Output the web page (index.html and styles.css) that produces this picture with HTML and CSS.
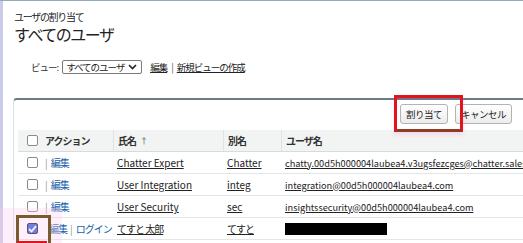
FILE: index.html
```html
<!DOCTYPE html>
<html lang="ja">
<head>
    <meta charset="UTF-8">
    <title>すべてのユーザ</title>
    <link rel="stylesheet" href="styles.css">
</head>
<body>
    <div class="page">
        <div class="head">
            <div class="sub">ユーザの割り当て</div>
            <h1 class="title">すべてのユーザ</h1>
        </div>

        <div class="view-bar">
            <span class="view-label">ビュー:</span>
            <div class="select">
                <span>すべてのユーザ</span>
                <svg width="9" height="6" viewBox="0 0 9 6"><path d="M1 1 L4.5 4.5 L8 1" fill="none" stroke="#222" stroke-width="1.6"/></svg>
            </div>
            <a href="#" class="link">編集</a>
            <span class="sep">|</span>
            <a href="#" class="link">新規ビューの作成</a>
        </div>

        <div class="panel">
            <div class="btn-row">
                <button class="btn">割り当て</button>
                <button class="btn">キャンセル</button>
            </div>

            <div class="row row-head">
                <div class="cell cell-action"><span class="box"></span><span class="jp">アクション</span></div>
                <div class="cell"><span class="jp">氏名</span> <span class="arrow">↑</span></div>
                <div class="cell"><span class="jp">別名</span></div>
                <div class="cell"><span class="jp">ユーザ名</span></div>
            </div>
            <div class="row">
                <div class="cell cell-action"><span class="box"></span><span class="bar">|</span><a href="#" class="act">編集</a></div>
                <div class="cell"><a href="#" class="name">Chatter Expert</a></div>
                <div class="cell"><a href="#" class="name">Chatter</a></div>
                <div class="cell"><a href="#" class="name mail">chatty.00d5h000004laubea4.v3ugsfezcges@chatter.salesforce.com</a></div>
            </div>
            <div class="row">
                <div class="cell cell-action"><span class="box"></span><span class="bar">|</span><a href="#" class="act">編集</a></div>
                <div class="cell"><a href="#" class="name">User Integration</a></div>
                <div class="cell"><a href="#" class="name">integ</a></div>
                <div class="cell"><a href="#" class="name mail">integration@00d5h000004laubea4.com</a></div>
            </div>
            <div class="row">
                <div class="cell cell-action"><span class="box"></span><span class="bar">|</span><a href="#" class="act">編集</a></div>
                <div class="cell"><a href="#" class="name">User Security</a></div>
                <div class="cell"><a href="#" class="name">sec</a></div>
                <div class="cell"><a href="#" class="name mail">insightssecurity@00d5h000004laubea4.com</a></div>
            </div>
            <div class="row">
                <div class="cell cell-action"><span class="box checked">
                    <svg width="9" height="8" viewBox="0 0 9 8"><path d="M1 4 L3.5 6.5 L8 1.2" fill="none" stroke="#fff" stroke-width="1.8"/></svg>
                </span><a href="#" class="act">編集</a><span class="bar">|</span><a href="#" class="act">ログイン</a></div>
                <div class="cell"><a href="#" class="name jp">てすと 太郎</a></div>
                <div class="cell"><a href="#" class="name jp">てすと</a></div>
                <div class="cell"><span class="redact"></span></div>
            </div>
        </div>
    </div>

    <!-- annotations -->
    <div class="mark mark-btn"></div>
    <div class="glow glow-check"></div>
    <div class="mark mark-check"></div>
    <div class="mark mark-below"></div>
</body>
</html>
```

FILE: styles.css
```css
* {
    margin: 0;
    padding: 0;
    box-sizing: border-box;
}

body {
    font-family: "Noto Sans CJK JP", "Noto Sans", sans-serif;
    color: #222;
    background: #fff;
    border-top: 1px solid #8eacb9;
    overflow: hidden;
}

.page {
    min-height: 242px;
    border-left: 3px solid #c9cbe7;
}

/* Kopf */
.head {
    padding: 9px 0 0 11px;
}

.sub {
    font-size: 10px;
    line-height: 14px;
    letter-spacing: -1.3px;
}

.title {
    margin-top: 1px;
    font-size: 16px;
    font-weight: normal;
    line-height: 18px;
    letter-spacing: -1.5px;
}

/* Ansicht */
.view-bar {
    display: flex;
    align-items: center;
    margin: 16px 0 0 28px;
    font-size: 9.5px;
    letter-spacing: -1px;
    height: 15px;
}

.view-label {
    margin-right: 4px;
    color: #333;
}

.select {
    display: flex;
    align-items: center;
    justify-content: space-between;
    width: 80px;
    height: 14px;
    padding: 0 4px 0 3px;
    border: 1px solid #7a7a7a;
    border-radius: 2px;
    margin-right: 8px;
    white-space: nowrap;
}

.link {
    color: #222;
    text-decoration: underline;
}

.sep {
    margin: 0 4px;
    color: #555;
}

/* Tabelle */
.panel {
    margin: 24px 0 0 10px;
    border-top: 2px solid #6b7989;
    border-left: 1px solid #dfe2e5;
    border-radius: 4px 0 0 0;
    padding-left: 4px;
}

.btn-row {
    display: flex;
    justify-content: flex-end;
    gap: 7px;
    padding: 4px 11px 6px 0;
}

.btn {
    font-family: inherit;
    font-size: 9.5px;
    letter-spacing: -0.5px;
    height: 20px;
    padding: 0 5px;
    color: #222;
    background: linear-gradient(#ffffff, #ececec);
    border: 1px solid #b3b3b3;
    border-radius: 3px;
}

.row {
    display: grid;
    grid-template-columns: 95px 110px 58px 1fr;
    height: 22px;
    border-bottom: 1px solid #e3e6e8;
    font-size: 10px;
    white-space: nowrap;
}

.row-head {
    background: #f2f3f3;
    border-bottom: 1px solid #d6dbdd;
    font-weight: bold;
    color: #333;
}

.row-head .cell + .cell {
    border-left: 1px solid #e0e3e5;
}

.cell {
    display: flex;
    align-items: center;
    padding-left: 4px;
    overflow: hidden;
}

.cell-action {
    padding-left: 9px;
}

.jp {
    letter-spacing: -1px;
}

.box {
    display: inline-flex;
    align-items: center;
    justify-content: center;
    width: 11px;
    height: 11px;
    border: 1px solid #8a8a8a;
    border-radius: 2px;
    background: #fff;
    margin-right: 7px;
    flex-shrink: 0;
}

.box.checked {
    background: #2f5fd8;
    border: 1px solid #1b1b3a;
    margin-right: 11px;
}

.arrow {
    font-size: 8px;
    color: #888;
    margin-left: 4px;
}

.bar {
    color: #999;
    margin: 0 3px 0 0;
}

.act + .bar {
    margin: 0 3px;
}

.act {
    color: #1a5ea8;
    text-decoration: none;
    letter-spacing: -1px;
}

.name {
    color: #222;
    text-decoration: underline;
}

.mail {
    font-size: 9.2px;
}

.redact {
    display: block;
    width: 102px;
    height: 12px;
    background: #000;
}

/* Markierungen */
.mark {
    position: absolute;
    border: 3px solid #e1141e;
}

.mark-btn {
    left: 394px;
    top: 95px;
    width: 69px;
    height: 37px;
    border-bottom-color: #8f3b22;
    box-shadow: 0 3px 4px rgba(255, 120, 200, 0.2);
}

.mark-check {
    left: 16px;
    top: 215px;
    width: 35px;
    height: 32px;
    border-color: #7b5b2e;
}

.mark-below {
    left: 17px;
    top: 241px;
    width: 30px;
    height: 8px;
    border: none;
    background: #e1141e;
}

.glow {
    position: absolute;
    background: rgba(250, 205, 240, 0.3);
}

.glow-check {
    left: 0;
    top: 208px;
    width: 62px;
    height: 35px;
}
```
